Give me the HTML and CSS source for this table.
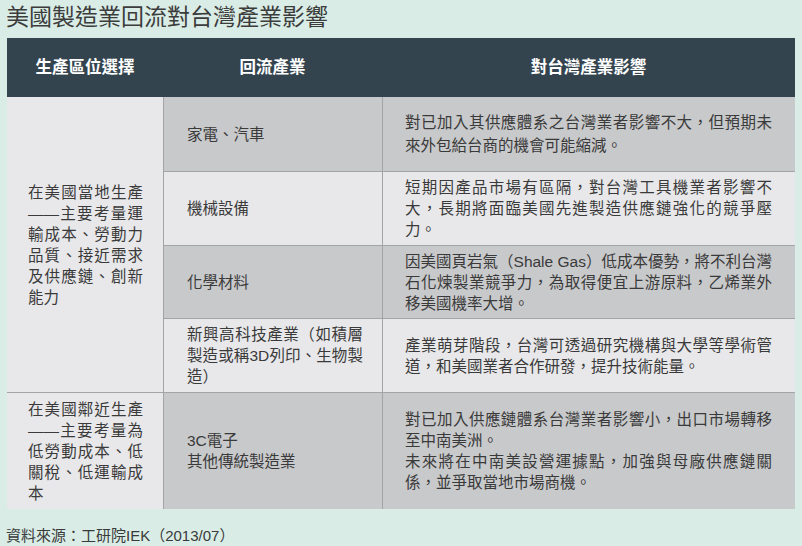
FILE: index.html
```html
<!DOCTYPE html>
<html lang="zh-Hant">
<head>
<meta charset="utf-8">
<title>美國製造業回流對台灣產業影響</title>
<link rel="stylesheet" href="styles.css">
</head>
<body>
<div class="page">
  <h1 class="title">美國製造業回流對台灣產業影響</h1>
  <table class="impact">
    <colgroup>
      <col class="c1">
      <col class="c2">
      <col class="c3">
    </colgroup>
    <thead>
      <tr class="head">
        <th>生產區位選擇</th>
        <th>回流產業</th>
        <th>對台灣產業影響</th>
      </tr>
    </thead>
    <tbody>
      <tr class="r r1 dark">
        <td class="loc" rowspan="4">在美國當地生產——主要考量運輸成本、勞動力品質、接近需求及供應鏈、創新能力</td>
        <td class="ind">家電、汽車</td>
        <td class="eff">對已加入其供應體系之台灣業者影響不大，但預期未來外包給台商的機會可能縮減。</td>
      </tr>
      <tr class="r r2 light">
        <td class="ind">機械設備</td>
        <td class="eff">短期因產品市場有區隔，對台灣工具機業者影響不大，長期將面臨美國先進製造供應鏈強化的競爭壓力。</td>
      </tr>
      <tr class="r r3 dark">
        <td class="ind">化學材料</td>
        <td class="eff">因美國頁岩氣（Shale Gas）低成本優勢，將不利台灣石化煉製業競爭力，為取得便宜上游原料，乙烯業外移美國機率大增。</td>
      </tr>
      <tr class="r r4 light">
        <td class="ind">新興高科技產業（如積層製造或稱3D列印、生物製造）</td>
        <td class="eff">產業萌芽階段，台灣可透過研究機構與大學等學術管道，和美國業者合作研發，提升技術能量。</td>
      </tr>
      <tr class="r r5 dark">
        <td class="loc">在美國鄰近生產——主要考量為低勞動成本、低關稅、低運輸成本</td>
        <td class="ind">3C電子<br>其他傳統製造業</td>
        <td class="eff"><p class="para">對已加入供應鏈體系台灣業者影響小，出口市場轉移至中南美洲。</p><p class="para">未來將在中南美設營運據點，加強與母廠供應鏈關係，並爭取當地市場商機。</p></td>
      </tr>
    </tbody>
  </table>
  <p class="source">資料來源：工研院IEK（2013/07）</p>
</div>
</body>
</html>
```

FILE: styles.css
```css
html, body {
  margin: 0;
  padding: 0;
  background: #d9ede6;
}

body {
  font-family: "Liberation Sans", "Noto Sans CJK TC", sans-serif;
  color: #3a3a3a;
}

.page {
  width: 802px;
  height: 546px;
  overflow: hidden;
}

.title {
  margin: 0;
  padding-left: 6px;
  height: 38px;
  line-height: 34px;
  font-size: 23px;
  font-weight: 400;
  color: #3c3c3c;
}

.impact {
  margin-left: 7px;
  width: 788px;
  table-layout: fixed;
  border-collapse: separate;
  border-spacing: 0;
  font-size: 15.5px;
  line-height: 21px;
}

.c1 { width: 156px; }
.c2 { width: 219px; }
.c3 { width: 413px; }

.head {
  height: 59px;
  background: #33444f;
}

.head th {
  color: #ffffff;
  font-size: 16.5px;
  font-weight: 700;
  text-align: center;
  padding: 0;
}

.impact td {
  vertical-align: middle;
  text-align: justify;
  background: #e8e8ea;
}

.r1 { height: 74px; }
.r2 { height: 74px; }
.r3 { height: 73px; }
.r4 { height: 74px; }
.r5 { height: 117px; }

.r1 .eff { line-height: 23px; }

.dark .ind,
.dark .eff {
  background: #c8c9cb;
}

.light .ind,
.light .eff {
  background: #e8e8ea;
}

.loc {
  padding: 0 20px 0 21px;
}

.ind {
  padding: 0 19px 0 23px;
  border-left: 1px solid #a3a4a6;
}

.eff {
  padding: 0 23px 0 22px;
  border-left: 1px solid #a3a4a6;
}

.r2 td,
.r3 td,
.r4 td,
.r5 td {
  border-top: 1px solid #a3a4a6;
}

.para {
  margin: 0;
}

.source {
  margin: 17px 0 0 6px;
  font-size: 15px;
  line-height: 20px;
  color: #3a3a3a;
}
```
